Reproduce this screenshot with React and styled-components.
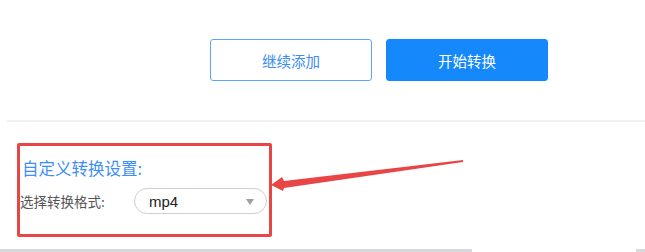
import React from "react";
import styled, { createGlobalStyle } from "styled-components";

const GlobalStyle = createGlobalStyle`
  html, body {
    margin: 0;
    padding: 0;
    background: #fff;
    font-family: "Noto Sans CJK SC", "Liberation Sans", sans-serif;
  }
  #root {
    position: relative;
    width: 645px;
    height: 252px;
    overflow: hidden;
  }
`;

const App = () => {
  return (
    <Page>
      <GlobalStyle />
      <Actions>
        <Button>继续添加</Button>
        <Button primary>开始转换</Button>
      </Actions>
      <Divider />
      <Settings>
        <Title>自定义转换设置:</Title>
        <Row>
          <Label>选择转换格式:</Label>
          <Select>
            <SelectValue>mp4</SelectValue>
            <Caret />
          </Select>
        </Row>
      </Settings>
      <Arrow viewBox="0 0 200 40" width="200" height="40">
        <path
          d="M193 2 L14 23 L12 19 L1 27 L13 33 L14 30 L193 4 Z"
          fill="#e84646"
        />
      </Arrow>
      <Scrollbar>
        <Track width={472} />
        <Gap />
        <Track />
      </Scrollbar>
    </Page>
  );
};

export default App;

const Page = styled.div`
  position: relative;
  width: 645px;
  height: 252px;
  display: flex;
  flex-direction: column;
`;

const Actions = styled.div`
  display: flex;
  gap: 14px;
  padding: 39px 0 0 210px;
`;

const Button = styled.div`
  width: 162px;
  height: 42px;
  box-sizing: border-box;
  border-radius: 3px;
  display: flex;
  align-items: center;
  justify-content: center;
  font-size: 14.5px;
  border: 1px solid ${(p) => (p.primary ? "#1589fb" : "#5aa6fb")};
  background: ${(p) => (p.primary ? "#1589fb" : "#fff")};
  color: ${(p) => (p.primary ? "#fff" : "#3b8df5")};
`;

const Divider = styled.div`
  margin: 39px 0 0 7px;
  height: 2px;
  background: #f1f1f1;
`;

const Settings = styled.div`
  margin: 21px 0 0 17px;
  width: 255px;
  box-sizing: border-box;
  border: 3px solid #e84646;
  border-radius: 2px;
  padding: 11px 0 20px 1px;
`;

const Title = styled.div`
  font-size: 16.5px;
  line-height: 22px;
  color: #3d8ef8;
  padding-left: 1px;
`;

const Row = styled.div`
  display: flex;
  align-items: center;
  margin-top: 9px;
`;

const Label = styled.div`
  font-size: 13.5px;
  color: #555;
  width: 114px;
  margin-left: -1px;
`;

const Select = styled.div`
  width: 133px;
  height: 26px;
  box-sizing: border-box;
  border: 1px solid #cfcfcf;
  border-radius: 13px;
  display: flex;
  align-items: center;
  justify-content: space-between;
  padding: 0 12px 0 14px;
`;

const SelectValue = styled.span`
  font-family: "Liberation Sans", Arial, sans-serif;
  font-size: 15px;
  color: #222;
`;

const Caret = styled.span`
  width: 0;
  height: 0;
  border-left: 4px solid transparent;
  border-right: 4px solid transparent;
  border-top: 6px solid #a0a0a0;
  margin-top: 2px;
`;

const Arrow = styled.svg`
  position: absolute;
  left: 270px;
  top: 158px;
`;

const Scrollbar = styled.div`
  display: flex;
  margin-top: auto;
  height: 3px;
`;

const Track = styled.div`
  background: #d6d8db;
  ${(p) => (p.width ? `width: ${p.width}px;` : "flex: 1;")}
`;

const Gap = styled.div`
  width: 164px;
`;
